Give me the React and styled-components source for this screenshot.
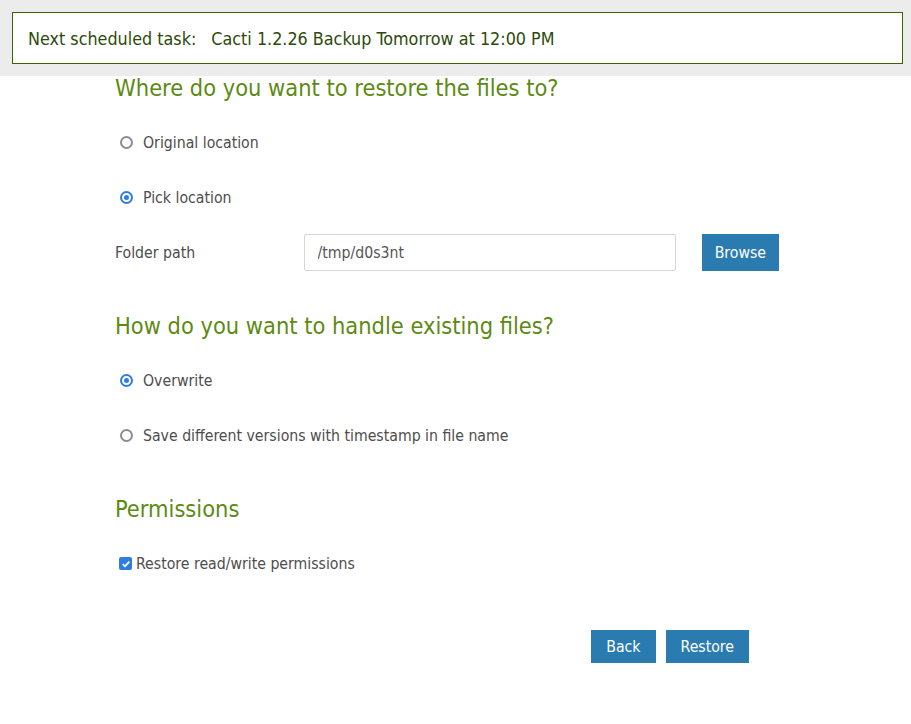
import styled, { createGlobalStyle } from "styled-components";

const GlobalStyle = createGlobalStyle`
    body {
        margin: 0;
        background: #ffffff;
        font-family: "DejaVu Sans", "Liberation Sans", sans-serif;
        font-stretch: condensed;
        color: #4d4d4d;
    }
`;

function App() {
    return (
        <>
            <GlobalStyle />
            <TopBand>
                <Notice>
                    <strong>Next scheduled task:</strong>
                    <span>Cacti 1.2.26 Backup Tomorrow at 12:00 PM</span>
                </Notice>
            </TopBand>
            <Content>
                <Heading>Where do you want to restore the files to?</Heading>
                <OptionRow>
                    <Radio />
                    Original location
                </OptionRow>
                <OptionRow>
                    <Radio checked />
                    Pick location
                </OptionRow>
                <FieldRow>
                    <FieldLabel>Folder path</FieldLabel>
                    <PathInput defaultValue="/tmp/d0s3nt" />
                    <Button>Browse</Button>
                </FieldRow>

                <Heading>How do you want to handle existing files?</Heading>
                <OptionRow>
                    <Radio checked />
                    Overwrite
                </OptionRow>
                <OptionRow>
                    <Radio />
                    Save different versions with timestamp in file name
                </OptionRow>

                <Heading>Permissions</Heading>
                <CheckRow>
                    <Check>
                        <svg width="10" height="10" viewBox="0 0 10 10">
                            <path d="M1.8 5.2 L4 7.3 L8.3 2.6" fill="none" stroke="#fff" strokeWidth="1.8" />
                        </svg>
                    </Check>
                    Restore read/write permissions
                </CheckRow>

                <Actions>
                    <Button>Back</Button>
                    <Button>Restore</Button>
                </Actions>
            </Content>
        </>
    );
}

const TopBand = styled.div`
    background: #ececec;
    padding: 12px 8px 12px 12px;
`;

const Notice = styled.div`
    height: 52px;
    box-sizing: border-box;
    border: 1px solid #3b6300;
    background: #fff;
    display: flex;
    align-items: center;
    padding-left: 15px;
    gap: 15px;
    font-size: 17.8px;
    color: #2d4a0b;

    strong {
        font-weight: 500;
    }
`;

const Content = styled.div`
    padding: 0 0 0 115px;
    width: 664px;
`;

const Heading = styled.h2`
    margin: 0 0 15px;
    height: 24px;
    line-height: 24px;
    font-size: 23.4px;
    font-weight: 400;
    color: #5d8a12;

    &:not(:first-child) {
        margin-top: 34px;
    }
`;

const OptionRow = styled.div`
    display: flex;
    align-items: center;
    height: 55px;
    padding-left: 5px;
    gap: 10px;
    font-size: 15.7px;
    color: #4d4d4d;
`;

const Radio = styled.span`
    width: 13px;
    height: 13px;
    box-sizing: border-box;
    border-radius: 50%;
    border: 2px solid ${(p) => (p.checked ? "#2f7de1" : "#8a8a94")};
    display: inline-flex;
    align-items: center;
    justify-content: center;

    &::after {
        content: "";
        width: 5px;
        height: 5px;
        border-radius: 50%;
        background: ${(p) => (p.checked ? "#2f7de1" : "transparent")};
    }
`;

const FieldRow = styled.div`
    display: flex;
    align-items: center;
    height: 55px;
`;

const FieldLabel = styled.div`
    width: 189px;
    font-size: 15.7px;
    color: #4d4d4d;
`;

const PathInput = styled.input`
    width: 373px;
    height: 37px;
    box-sizing: border-box;
    border: 1px solid #d6d6d6;
    border-radius: 2px;
    padding: 0 13px;
    font-family: inherit;
    font-stretch: condensed;
    font-size: 15.7px;
    color: #555;
    outline: none;
`;

const Button = styled.button`
    height: 37px;
    padding: 0 13px;
    margin-left: 26px;
    border: none;
    background: #2a7bb0;
    color: #fff;
    font-family: inherit;
    font-stretch: condensed;
    font-size: 15.7px;
    cursor: pointer;
`;

const CheckRow = styled.div`
    display: flex;
    align-items: center;
    gap: 4px;
    height: 55px;
    padding-left: 4px;
    font-size: 15.7px;
    color: #4d4d4d;
`;

const Check = styled.span`
    width: 13px;
    height: 13px;
    border-radius: 2px;
    background: #2f7de1;
    display: inline-flex;
    align-items: center;
    justify-content: center;
`;

const Actions = styled.div`
    display: flex;
    justify-content: flex-end;
    gap: 10px;
    margin-top: 39px;
    padding-right: 30px;

    button {
        margin-left: 0;
        height: 33px;
        padding: 0 15px;
    }
`;

export default App;
